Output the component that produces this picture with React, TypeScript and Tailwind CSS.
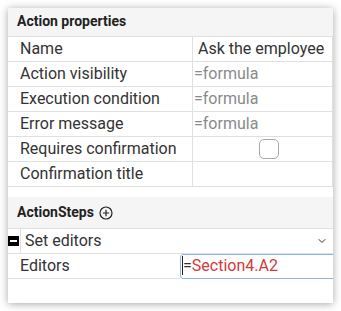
import { ChevronDown } from 'lucide-react'

const rows = [
  { label: 'Name', value: 'Ask the employee', kind: 'text' },
  { label: 'Action visibility', value: '=formula', kind: 'formula' },
  { label: 'Execution condition', value: '=formula', kind: 'formula' },
  { label: 'Error message', value: '=formula', kind: 'formula' },
  { label: 'Requires confirmation', value: '', kind: 'check' },
  { label: 'Confirmation title', value: '', kind: 'text' }
]

function PlusCircle() {
  return (
    <svg width="14" height="14" viewBox="0 0 14 14" fill="none">
      <circle cx="7" cy="7" r="6" stroke="#222" strokeWidth="1.2" />
      <path d="M7 3.8v6.4M3.8 7h6.4" stroke="#222" strokeWidth="1.2" />
    </svg>
  )
}

export default function App() {
  return (
    <div
      className="w-[341px] h-[311px] bg-white p-2"
      style={{ fontFamily: 'Roboto, "Liberation Sans", sans-serif' }}
    >
      <div className="w-[325px] h-[295px] bg-white shadow-[0_1px_8px_rgba(0,0,0,0.35)] overflow-hidden flex flex-col">
        <div className="h-[29px] shrink-0 bg-[#f5f5f5] border-b border-[#e0e0e0] pl-[9px] pt-[3px] text-[14px] font-bold text-[#222]">
          Action properties
        </div>
        <div className="border-r border-[#e0e0e0] w-[325px]">
          {rows.map((row) => (
            <div
              key={row.label}
              className="grid grid-cols-[184px_1fr] h-[25px] border-b border-[#e0e0e0] text-[16px] leading-[24px]"
            >
              <div className="pl-[12px] text-[#333] whitespace-nowrap overflow-hidden">
                {row.label}
              </div>
              <div className="border-l border-[#e0e0e0] flex items-center whitespace-nowrap overflow-hidden">
                {row.kind === 'formula' && (
                  <span className="pl-[1px] text-[#8a8a8a]">{row.value}</span>
                )}
                {row.kind === 'text' && (
                  <span className="pl-[5px] text-[#333]">{row.value}</span>
                )}
                {row.kind === 'check' && (
                  <span className="ml-[66px] w-[20px] h-[20px] rounded-[5px] border border-[#a8a8a8] bg-white" />
                )}
              </div>
            </div>
          ))}
        </div>
        <div className="h-[10px] shrink-0" />
        <div className="h-[32px] shrink-0 bg-[#f5f5f5] border-b border-[#e0e0e0] pl-[9px] flex items-center gap-[5px] text-[14px] font-bold text-[#222]">
          ActionSteps
          <PlusCircle />
        </div>
        <div className="h-[25px] shrink-0 border-b border-[#e0e0e0] flex items-center text-[16px] text-[#333]">
          <div className="w-[12px] h-[25px] flex items-center">
            <span className="w-[11px] h-[10px] bg-black flex items-center justify-center">
              <span className="w-[7px] h-[2px] bg-white" />
            </span>
          </div>
          <div className="h-[25px] border-l border-[#e0e0e0] pl-[4px] leading-[24px] flex-1">
            Set editors
          </div>
          <ChevronDown size={12} strokeWidth={2} className="text-[#333] mr-[5px]" />
        </div>
        <div className="h-[25px] shrink-0 flex text-[16px]">
          <div className="w-[172px] shrink-0 border-b border-[#e0e0e0] pl-[12px] leading-[24px] text-[#333]">
            Editors
          </div>
          <div className="w-[170px] shrink-0 h-[25px] border border-[#8fb1f0] rounded-l-[3px] pl-[1px] leading-[22px] whitespace-nowrap">
            <span className="border-l border-[#222] text-[#333]">=</span>
            <span className="text-[#d33a3a]">Section4.A2</span>
          </div>
        </div>
      </div>
    </div>
  )
}
